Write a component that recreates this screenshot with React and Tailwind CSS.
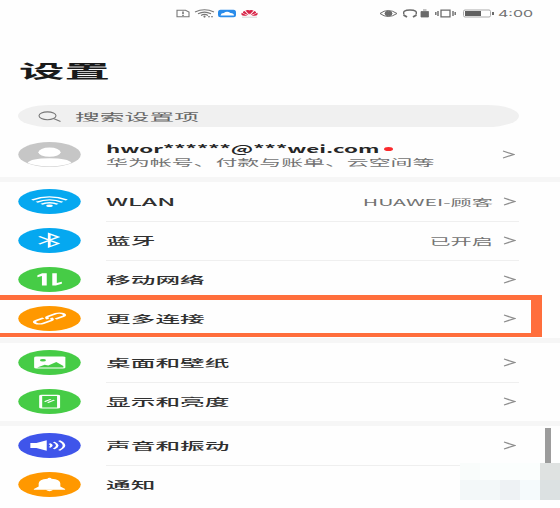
import React from "react";

const Chevron = () => (
  <svg
    className="h-[9px] w-[13px] shrink-0"
    viewBox="0 0 13 9"
    fill="none"
    stroke="#8c8c8c"
    strokeWidth="1.2"
  >
    <path d="M1 1 L11.5 4.5 L1 8" />
  </svg>
);

const Badge = ({ color, children }) => (
  <svg
    className="h-[25px] w-[63px] shrink-0"
    viewBox="0 0 25 25"
    preserveAspectRatio="none"
    fill="none"
    stroke="white"
  >
    <circle cx="12.5" cy="12.5" r="12.4" fill={color} stroke="none" />
    {children}
  </svg>
);

const WifiIcon = () => (
  <Badge color="#05a8f0">
    <g strokeWidth="1.2">
      <path d="M5.6 11 Q12.5 4.6 19.4 11" />
      <path d="M7.4 13.2 Q12.5 8.4 17.6 13.2" />
      <path d="M9.3 15.3 Q12.5 12.2 15.7 15.3" />
    </g>
    <circle cx="12.5" cy="16.8" r="1.3" fill="white" stroke="none" />
  </Badge>
);

const BluetoothIcon = () => (
  <Badge color="#05a8f0">
    <path
      d="M8.4 8.4 L16 15.6 L12.4 18.8 V5.8 L16 9 L8.4 16.2"
      strokeWidth="1.1"
    />
  </Badge>
);

const DataIcon = () => (
  <Badge color="#46cc46">
    <g fill="white" stroke="none">
      <path d="M9.6 6.2 H11.4 V18.5 H9.5 V9 L7.7 10.2 V8.3 Z" />
      <path d="M13.6 6.2 H15.4 V16 L17.4 14.8 V16.7 L15 18.5 H13.6 Z" />
    </g>
  </Badge>
);

const LinkIcon = () => (
  <Badge color="#ff9800">
    <g transform="translate(12.5 12.5) rotate(-41)" strokeWidth="1.35">
      <path d="M-1.5 -2 H-5.2 A2 2 0 0 0 -5.2 2 H-1.2 A2 2 0 0 0 0.8 0" />
      <path d="M1.5 2 H5.2 A2 2 0 0 0 5.2 -2 H1.2 A2 2 0 0 0 -0.8 0" />
    </g>
  </Badge>
);

const PictureIcon = () => (
  <Badge color="#46cc46">
    <rect x="6.4" y="6.6" width="12.4" height="12" rx="1" fill="white" stroke="none" />
    <circle cx="9.9" cy="10.2" r="1.2" fill="#46cc46" stroke="none" />
    <path
      d="M7.6 17.4 L10.6 14.8 L12 15.6 L15.2 12 L18 16 V17.4 Z"
      fill="#46cc46"
      stroke="none"
    />
  </Badge>
);

const DisplayIcon = () => (
  <Badge color="#46cc46">
    <rect x="9" y="6.4" width="7.1" height="12.6" rx="0.4" strokeWidth="1.2" />
    <path d="M10.6 12.6 L13 10.2 M11.8 13.6 L14.4 11" strokeWidth="0.8" />
  </Badge>
);

const SoundIcon = () => (
  <Badge color="#3f55ea">
    <path d="M4.9 10 H7.3 L11.4 7.3 V17.7 L7.3 15 H4.9 Z" fill="white" stroke="none" />
    <g strokeWidth="1">
      <path d="M12.5 10.6 Q14 12.5 12.5 14.4" />
      <path d="M14.2 9 Q17 12.5 14.2 16" />
      <path d="M16.3 7.6 Q20.2 12.5 16.3 17.4" />
    </g>
  </Badge>
);

const BellIcon = () => (
  <Badge color="#ff9800">
    <g fill="white" stroke="none">
      <path d="M12.5 5.8 Q13.2 5.8 13.3 6.8 Q16.8 7.6 16.8 11.5 V14.6 L18.7 17 V17.7 H6.3 V17 L8.2 14.6 V11.5 Q8.2 7.6 11.7 6.8 Q11.8 5.8 12.5 5.8 Z" />
      <path d="M11 17.7 H14 Q12.5 20.6 11 17.7 Z" />
    </g>
  </Badge>
);

const AvatarIcon = () => (
  <Badge color="#c6c6c6">
    <g fill="white" stroke="none">
      <ellipse cx="12.5" cy="10.2" rx="4.4" ry="4.6" />
      <path d="M3.8 21 Q5 16.3 12.5 16.3 Q20 16.3 21.2 21 Q17.5 24.4 12.5 24.4 Q7.5 24.4 3.8 21 Z" />
    </g>
  </Badge>
);

const groups = [
  [
    { icon: WifiIcon, label: "WLAN", value: "HUAWEI-顾客" },
    { icon: BluetoothIcon, label: "蓝牙", value: "已开启" },
    { icon: DataIcon, label: "移动网络" },
    { icon: LinkIcon, label: "更多连接", highlighted: true },
  ],
  [
    { icon: PictureIcon, label: "桌面和壁纸" },
    { icon: DisplayIcon, label: "显示和亮度" },
  ],
  [
    { icon: SoundIcon, label: "声音和振动" },
    { icon: BellIcon, label: "通知", covered: true },
  ],
];

const Row = ({ item, last }) => {
  const Icon = item.icon;
  return (
    <div className="relative flex h-[39px] items-start pl-[18px]">
      <div className="flex h-full items-center">
        <Icon />
      </div>
      <div
        className={`ml-[25px] flex h-[40px] w-[413px] items-center border-b ${
          last ? "border-transparent" : "border-[#efefef]"
        }`}
      >
        <span className="scale-y-[0.42] text-[24.7px] leading-none font-medium text-[#303030]">
          {item.label}
        </span>
        <span className="mr-[10px] ml-auto scale-y-[0.44] text-[21.2px] leading-none text-[#737373]">
          {item.value}
        </span>
        {item.covered ? null : <Chevron />}
        <span className="w-[3px]" />
      </div>
      {item.highlighted && (
        <div className="absolute -top-[4px] left-0 h-[42px] w-[542px] border-t-[5px] border-r-[11px] border-b-4 border-[#ff6e3c]" />
      )}
    </div>
  );
};

const StatusBar = () => (
  <div className="flex h-[26px] items-center pl-[176px] text-[#707070]">
    <svg className="h-[9px] w-[84px]" viewBox="0 0 84 9" fill="none">
      <path d="M1 1.2 H9.5 L13 3 V7.8 H1 Z" stroke="#777" strokeWidth="1.1" />
      <path d="M7 2.5 V5.2 M7 6 V7" stroke="#777" strokeWidth="1.6" />
      <g stroke="#777" strokeWidth="1.1">
        <path d="M19 3 Q28.5 -1.4 38 3" />
        <path d="M22 4.8 Q28.5 1.4 35 4.8" />
        <path d="M25 6.4 Q28.5 4.4 32 6.4" />
        <path d="M32 7.7 H38" strokeDasharray="2 1" />
      </g>
      <circle cx="28.5" cy="7.6" r="1.1" fill="#777" />
      <rect x="42" y="0.8" width="18" height="7.4" rx="2.5" fill="#288bea" />
      <path d="M44.5 6.4 Q45 4 47.8 4 Q51 1.6 54.5 4 Q58 4.2 58 6.4 Z" fill="white" />
      <g fill="#d72346">
        <path d="M73.2 5.6 L69.4 1.6 Q71.8 0.4 73.4 1.4 Z" />
        <path d="M73.8 5.6 L77.6 1.6 Q75.2 0.4 73.6 1.4 Z" />
        <path d="M72.6 6.2 L68.6 1.9 Q65.4 3 68 4.6 Z" />
        <path d="M74.4 6.2 L78.4 1.9 Q81.6 3 79 4.6 Z" />
        <path d="M71.5 6.8 L65.6 3.8 Q64.6 6.6 68 6.8 Z" />
        <path d="M75.5 6.8 L81.4 3.8 Q82.4 6.6 79 6.8 Z" />
        <path d="M71 1.4 H76 L73.5 5 Z" />
      </g>
      <path d="M66 8.2 H81" stroke="#ccc" strokeWidth="0.8" />
    </svg>
    <svg
      className="ml-[119px] h-[9px] w-[117px]"
      viewBox="0 0 117 9"
      fill="none"
      stroke="#6b6b6b"
    >
      <path d="M1 4.5 Q9 -1.5 18 4.5 Q9 10.5 1 4.5 Z" />
      <ellipse cx="9.5" cy="4.5" rx="3.5" ry="2.2" fill="#6b6b6b" />
      <path d="M25 5.5 Q23 1 31 1 Q39 1 37 5.5" strokeWidth="1.3" />
      <path d="M24.5 6 L28 8 M37.5 6 L34 8" strokeWidth="2" />
      <path d="M42 2.5 H49.5 V8 H42 Z M44 1 H47.5" fill="#6b6b6b" strokeWidth="0.8" />
      <path d="M62 1.2 H71 V7.8 H62 Z" strokeWidth="1.3" />
      <path d="M59 2 V7 M56.8 3 V6 M74 2 V7 M76.2 3 V6" strokeWidth="1.4" />
      <rect x="84.5" y="1" width="27" height="7" rx="1.5" stroke="#aaa" />
      <rect x="86" y="2" width="16" height="5" fill="#606060" stroke="none" />
      <path d="M114 3 V6" strokeWidth="2" />
    </svg>
    <span
      className="mt-px ml-[2px] scale-y-[0.58] text-[16px] leading-none"
      style={{ fontFamily: "Inter, sans-serif" }}
    >
      4:00
    </span>
  </div>
);

const Mosaic = () => (
  <div className="absolute top-[463px] left-[460px] grid grid-cols-5 grid-rows-[17px_20px]">
    <div className="w-5 bg-[#f9fcfb]" />
    <div className="w-5 bg-[#fbfefd]" />
    <div className="w-5 bg-[#fbfefd]" />
    <div className="w-5 bg-[#fbfefd]" />
    <div className="w-5 bg-[#dfe2e1]" />
    <div className="w-5 bg-[#f3f8f9]" />
    <div className="w-5 bg-[#f3f8f9]" />
    <div className="w-5 bg-[#eef2f4]" />
    <div className="w-5 bg-[#f5fafc]" />
    <div className="w-5 bg-[#dce1e2]" />
  </div>
);

const App = () => {
  return (
    <div className="relative h-[508px] w-[560px] overflow-hidden bg-[#fefefe] font-['Noto_Sans_CJK_SC',sans-serif] whitespace-nowrap">
      <StatusBar />
      <h1 className="mt-[22px] ml-[19px] flex h-[45px] items-center">
        <span className="scale-y-[0.4] text-[45.5px] leading-none font-bold text-[#1a1a1a]">
          设置
        </span>
      </h1>
      <div className="mt-3 ml-[18px] flex h-[22px] w-[501px] items-center rounded-[32px/11px] bg-[#f0f0f0] pl-[19px]">
        <svg
          className="h-[11px] w-[25px]"
          viewBox="0 0 25 11"
          fill="none"
          stroke="#777"
          strokeWidth="1.1"
        >
          <ellipse cx="10.5" cy="4.8" rx="8.5" ry="3.9" />
          <path d="M16.5 7.6 L23.5 10.4" />
        </svg>
        <span className="ml-[13px] scale-y-[0.42] text-[24.8px] leading-none text-[#666]">
          搜索设置项
        </span>
      </div>

      <div className="mt-[5px] flex h-[45px] items-center pl-[18px]">
        <AvatarIcon />
        <div className="mt-[2px] ml-[25px] flex w-[396px] flex-col">
          <div className="flex h-[13px] items-center">
            <span className="scale-y-[0.48] text-[22.3px] leading-none font-bold text-[#262626]">
              hwor******@***wei.com
            </span>
            <span className="ml-[4px] h-[4px] w-[9px] rounded-[50%] bg-[#fa2a2d]" />
          </div>
          <div className="flex h-[14px] items-center">
            <span className="scale-y-[0.44] text-[21.9px] leading-none text-[#737373]">
              华为帐号、付款与账单、云空间等
            </span>
          </div>
        </div>
        <Chevron />
      </div>

      {groups.map((rows, i) => (
        <div key={i} className="border-t-[5px] border-[#f6f6f6]">
          {rows.map((item, j) => (
            <Row key={item.label} item={item} last={j === rows.length - 1} />
          ))}
        </div>
      ))}

      <div className="absolute top-[428px] left-[545px] h-[35px] w-[6px] bg-[#9c9c9c]" />
      <Mosaic />
    </div>
  );
};

export default App;
